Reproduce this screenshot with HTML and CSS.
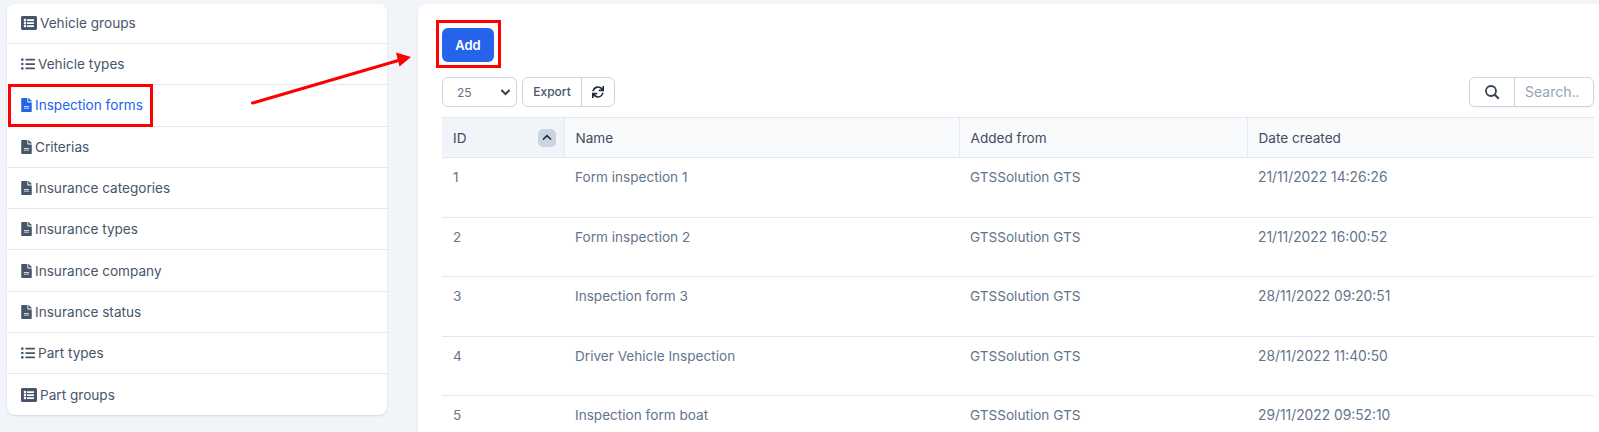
FILE: index.html
```html
<!DOCTYPE html>
<html lang="en">
<head>
<meta charset="utf-8">
<title>Inspection forms</title>
<link rel="stylesheet" href="styles.css">
</head>
<body>
<svg class="defs" width="0" height="0" aria-hidden="true">
  <symbol id="i-alt" viewBox="0 0 512 512"><path d="M464 480H48c-26.51 0-48-21.49-48-48V80c0-26.51 21.49-48 48-48h416c26.51 0 48 21.49 48 48v352c0 26.51-21.49 48-48 48zM128 120c-22.091 0-40 17.909-40 40s17.909 40 40 40 40-17.909 40-40-17.909-40-40-40zm0 96c-22.091 0-40 17.909-40 40s17.909 40 40 40 40-17.909 40-40-17.909-40-40-40zm0 96c-22.091 0-40 17.909-40 40s17.909 40 40 40 40-17.909 40-40-17.909-40-40-40zm288-136v-32c0-6.627-5.373-12-12-12H204c-6.627 0-12 5.373-12 12v32c0 6.627 5.373 12 12 12h200c6.627 0 12-5.373 12-12zm0 96v-32c0-6.627-5.373-12-12-12H204c-6.627 0-12 5.373-12 12v32c0 6.627 5.373 12 12 12h200c6.627 0 12-5.373 12-12zm0 96v-32c0-6.627-5.373-12-12-12H204c-6.627 0-12 5.373-12 12v32c0 6.627 5.373 12 12 12h200c6.627 0 12-5.373 12-12z"/></symbol>
  <symbol id="i-ul" viewBox="0 0 512 512"><path d="M48 48a48 48 0 1 0 48 48 48 48 0 0 0-48-48zm0 160a48 48 0 1 0 48 48 48 48 0 0 0-48-48zm0 160a48 48 0 1 0 48 48 48 48 0 0 0-48-48zm448 16H176a16 16 0 0 0-16 16v32a16 16 0 0 0 16 16h320a16 16 0 0 0 16-16v-32a16 16 0 0 0-16-16zm0-320H176a16 16 0 0 0-16 16v32a16 16 0 0 0 16 16h320a16 16 0 0 0 16-16V80a16 16 0 0 0-16-16zm0 160H176a16 16 0 0 0-16 16v32a16 16 0 0 0 16 16h320a16 16 0 0 0 16-16v-32a16 16 0 0 0-16-16z"/></symbol>
  <symbol id="i-file" viewBox="0 0 384 512"><path d="M224 136V0H24C10.7 0 0 10.7 0 24v464c0 13.3 10.7 24 24 24h336c13.3 0 24-10.7 24-24V160H248c-13.2 0-24-10.8-24-24zm64 236c0 6.6-5.4 12-12 12H108c-6.6 0-12-5.4-12-12v-8c0-6.6 5.4-12 12-12h168c6.6 0 12 5.4 12 12v8zm0-64c0 6.6-5.4 12-12 12H108c-6.6 0-12-5.4-12-12v-8c0-6.6 5.4-12 12-12h168c6.6 0 12 5.4 12 12v8zm96-186.1v6.1H256V0h6.1c6.4 0 12.5 2.5 17 7l97.9 98c4.5 4.5 7 10.6 7 16.9z"/></symbol>
</svg>

<div class="page">
  <nav class="side">
    <a class="side-item first"><svg class="ic ic-alt"><use href="#i-alt"/></svg>Vehicle groups</a>
    <a class="side-item"><svg class="ic ic-ul"><use href="#i-ul"/></svg>Vehicle types</a>
    <a class="side-item active"><svg class="ic ic-file"><use href="#i-file"/></svg>Inspection forms</a>
    <a class="side-item"><svg class="ic ic-file"><use href="#i-file"/></svg>Criterias</a>
    <a class="side-item"><svg class="ic ic-file"><use href="#i-file"/></svg>Insurance categories</a>
    <a class="side-item"><svg class="ic ic-file"><use href="#i-file"/></svg>Insurance types</a>
    <a class="side-item"><svg class="ic ic-file"><use href="#i-file"/></svg>Insurance company</a>
    <a class="side-item"><svg class="ic ic-file"><use href="#i-file"/></svg>Insurance status</a>
    <a class="side-item"><svg class="ic ic-ul"><use href="#i-ul"/></svg>Part types</a>
    <a class="side-item"><svg class="ic ic-alt"><use href="#i-alt"/></svg>Part groups</a>
  </nav>

  <main class="panel">
    <button class="btn-add" type="button">Add</button>
    <div class="toolbar">
      <div class="tools-left">
        <div class="select"><span>25</span>
          <svg class="chev" viewBox="0 0 12 8"><path d="M1.5 1.8 6 6.2l4.5-4.4" fill="none" stroke="#374151" stroke-width="2.2"/></svg>
        </div>
        <div class="btn-group">
          <button class="tool" type="button">Export</button>
          <button class="tool tool-icon" type="button"><svg class="sync" viewBox="0 0 512 512"><path d="M440.65 12.57l4 82.77A247.16 247.16 0 0 0 255.83 8C134.73 8 33.91 94.92 12.29 209.82A12 12 0 0 0 24.09 224h49.05a12 12 0 0 0 11.67-9.26 175.91 175.91 0 0 1 317-56.94l-101.46-4.86a12 12 0 0 0-12.57 12v47.41a12 12 0 0 0 12 12H500a12 12 0 0 0 12-12V12a12 12 0 0 0-12-12h-47.37a12 12 0 0 0-11.98 12.57zM255.83 432a175.61 175.61 0 0 1-146-77.8l101.8 4.87a12 12 0 0 0 12.57-12v-47.4a12 12 0 0 0-12-12H12a12 12 0 0 0-12 12V500a12 12 0 0 0 12 12h47.35a12 12 0 0 0 12-12.6l-4.15-82.57A247.17 247.17 0 0 0 255.83 504c121.11 0 221.93-86.92 243.55-201.82a12 12 0 0 0-11.8-14.18h-49.05a12 12 0 0 0-11.67 9.26A175.86 175.86 0 0 1 255.83 432z"/></svg></button>
        </div>
      </div>
      <div class="search">
        <span class="search-ic"><svg viewBox="0 0 16 16"><circle cx="7" cy="7" r="5" fill="none" stroke="#334155" stroke-width="1.8"/><path d="m10.8 10.8 4 4" stroke="#334155" stroke-width="2" fill="none"/></svg></span>
        <span class="search-input">Search..</span>
      </div>
    </div>

    <table class="grid">
      <colgroup><col class="c-id"><col class="c-name"><col class="c-from"><col></colgroup>
      <thead>
        <tr>
          <th><div class="th-id">ID<span class="sort"><svg viewBox="0 0 10 7"><path d="M1 5.5 5 1.6l4 3.9" fill="none" stroke="#1e293b" stroke-width="1.7"/></svg></span></div></th>
          <th>Name</th><th>Added from</th><th>Date created</th>
        </tr>
      </thead>
      <tbody>
        <tr><td>1</td><td>Form inspection 1</td><td>GTSSolution GTS</td><td class="date">21/11/2022 14:26:26</td></tr>
        <tr><td>2</td><td>Form inspection 2</td><td>GTSSolution GTS</td><td class="date">21/11/2022 16:00:52</td></tr>
        <tr><td>3</td><td>Inspection form 3</td><td>GTSSolution GTS</td><td class="date">28/11/2022 09:20:51</td></tr>
        <tr><td>4</td><td>Driver Vehicle Inspection</td><td>GTSSolution GTS</td><td class="date">28/11/2022 11:40:50</td></tr>
        <tr><td>5</td><td>Inspection form boat</td><td>GTSSolution GTS</td><td class="date">29/11/2022 09:52:10</td></tr>
      </tbody>
    </table>
  </main>

  <div class="mark mark-nav"></div>
  <div class="mark mark-add"></div>
  <svg class="arrow" viewBox="0 0 170 60"><path d="M2.5 54 150 11" stroke="#f00" stroke-width="3" stroke-linecap="round" fill="none"/><path d="M161 8 146 3.5l3.5 14z" fill="#f00"/></svg>
</div>
</body>
</html>
```
FILE: styles.css
```css
* { box-sizing: border-box; }
html, body { margin: 0; height: 432px; overflow: hidden; }
body { background: #f1f5f9; font-family: Inter, "Liberation Sans", sans-serif; font-size: 13.6px; color: #475569; }
.defs { position: absolute; }
.page { position: relative; display: flex; align-items: flex-start; height: 432px; padding: 4px 0 0 7px; overflow: hidden; }

.side { flex: 0 0 380px; height: 411px; margin-right: 31px; background: #fff; border-radius: 8px; box-shadow: 0 1px 2px rgba(15, 23, 42, .12); overflow: hidden; }
.side-item { display: flex; align-items: center; height: 41.3px; padding: 0 14px; border-bottom: 1px solid #e2e8f0; line-height: 20px; color: #475569; }
.side-item.first { height: 40px; padding-bottom: 2px; }
.side-item:last-child { border-bottom: 0; }
.side-item.active { color: #2563eb; }
.ic { flex: none; fill: currentColor; }
.ic-alt { width: 16px; height: 16px; margin-right: 3px; }
.ic-ul { width: 14px; height: 14px; margin-right: 3px; }
.ic-file { width: 11px; height: 14px; margin-right: 3px; }

.panel { flex: 1; height: 440px; padding: 24px 5px 0 24px; background: #fff; border-radius: 8px 0 0 8px; box-shadow: 0 1px 2px rgba(15, 23, 42, .12); }
.btn-add { display: block; width: 52px; height: 34px; padding: 0; border: 0; border-radius: 6px; background: #2563eb; color: #fff; font: 600 13px/34px Inter, sans-serif; }

.toolbar { display: flex; justify-content: space-between; margin-top: 15px; height: 30px; }
.tools-left { display: flex; gap: 5px; }
.select { display: flex; align-items: center; justify-content: space-between; width: 75px; height: 30px; padding: 0 5px 0 14px; border: 1px solid #cbd5e1; border-radius: 6px; font-size: 12px; color: #64748b; }
.chev { width: 11px; height: 8px; }
.btn-group { display: flex; height: 30px; border: 1px solid #cbd5e1; border-radius: 6px; }
.tool { padding: 0; width: 58px; border: 0; background: none; font: 500 12px/28px Inter, sans-serif; color: #475569; }
.tool-icon { display: flex; align-items: center; justify-content: center; width: 33px; border-left: 1px solid #cbd5e1; }
.sync { width: 12px; height: 12px; fill: #1e293b; }
.search { display: flex; width: 125px; height: 30px; border: 1px solid #cbd5e1; border-radius: 6px; box-shadow: 0 1px 2px rgba(15, 23, 42, .05); }
.search-ic { display: flex; align-items: center; justify-content: center; flex: 0 0 45px; border-right: 1px solid #cbd5e1; }
.search-ic svg { width: 16px; height: 16px; }
.search-input { padding-left: 10px; line-height: 28px; font-size: 14px; color: #94a3b8; }

.grid { width: 1152px; margin-top: 10px; border-collapse: collapse; table-layout: fixed; }
.c-id { width: 122px; }
.c-name { width: 395px; }
.c-from { width: 288px; }
.grid th { height: 40px; padding: 0 10px 0 11px; background: #f8fafc; border-top: 1px solid #e2e8f0; border-bottom: 1px solid #e2e8f0; border-left: 1px solid #e2e8f0; text-align: left; font-weight: 400; color: #3f4c5f; }
.grid th:first-child { border-left: 0; background: #f1f5f9; padding-right: 8px; }
.th-id { display: flex; align-items: center; justify-content: space-between; }
.sort { display: flex; align-items: center; justify-content: center; width: 18px; height: 18px; border-radius: 5px; background: #cbd5e1; }
.sort svg { width: 10px; height: 7px; }
.grid td { height: 59.6px; padding: 9px 10px 0 11px; vertical-align: top; line-height: 20px; color: #64748b; border-bottom: 1px solid #e2e8f0; }
.grid td.date { font-size: 13.8px; }

.mark { position: absolute; border: 3px solid #f00; }
.mark-nav { left: 8px; top: 84px; width: 145px; height: 43px; }
.mark-add { left: 436px; top: 20px; width: 65px; height: 48px; }
.arrow { position: absolute; left: 250px; top: 49px; width: 170px; height: 60px; }
```
